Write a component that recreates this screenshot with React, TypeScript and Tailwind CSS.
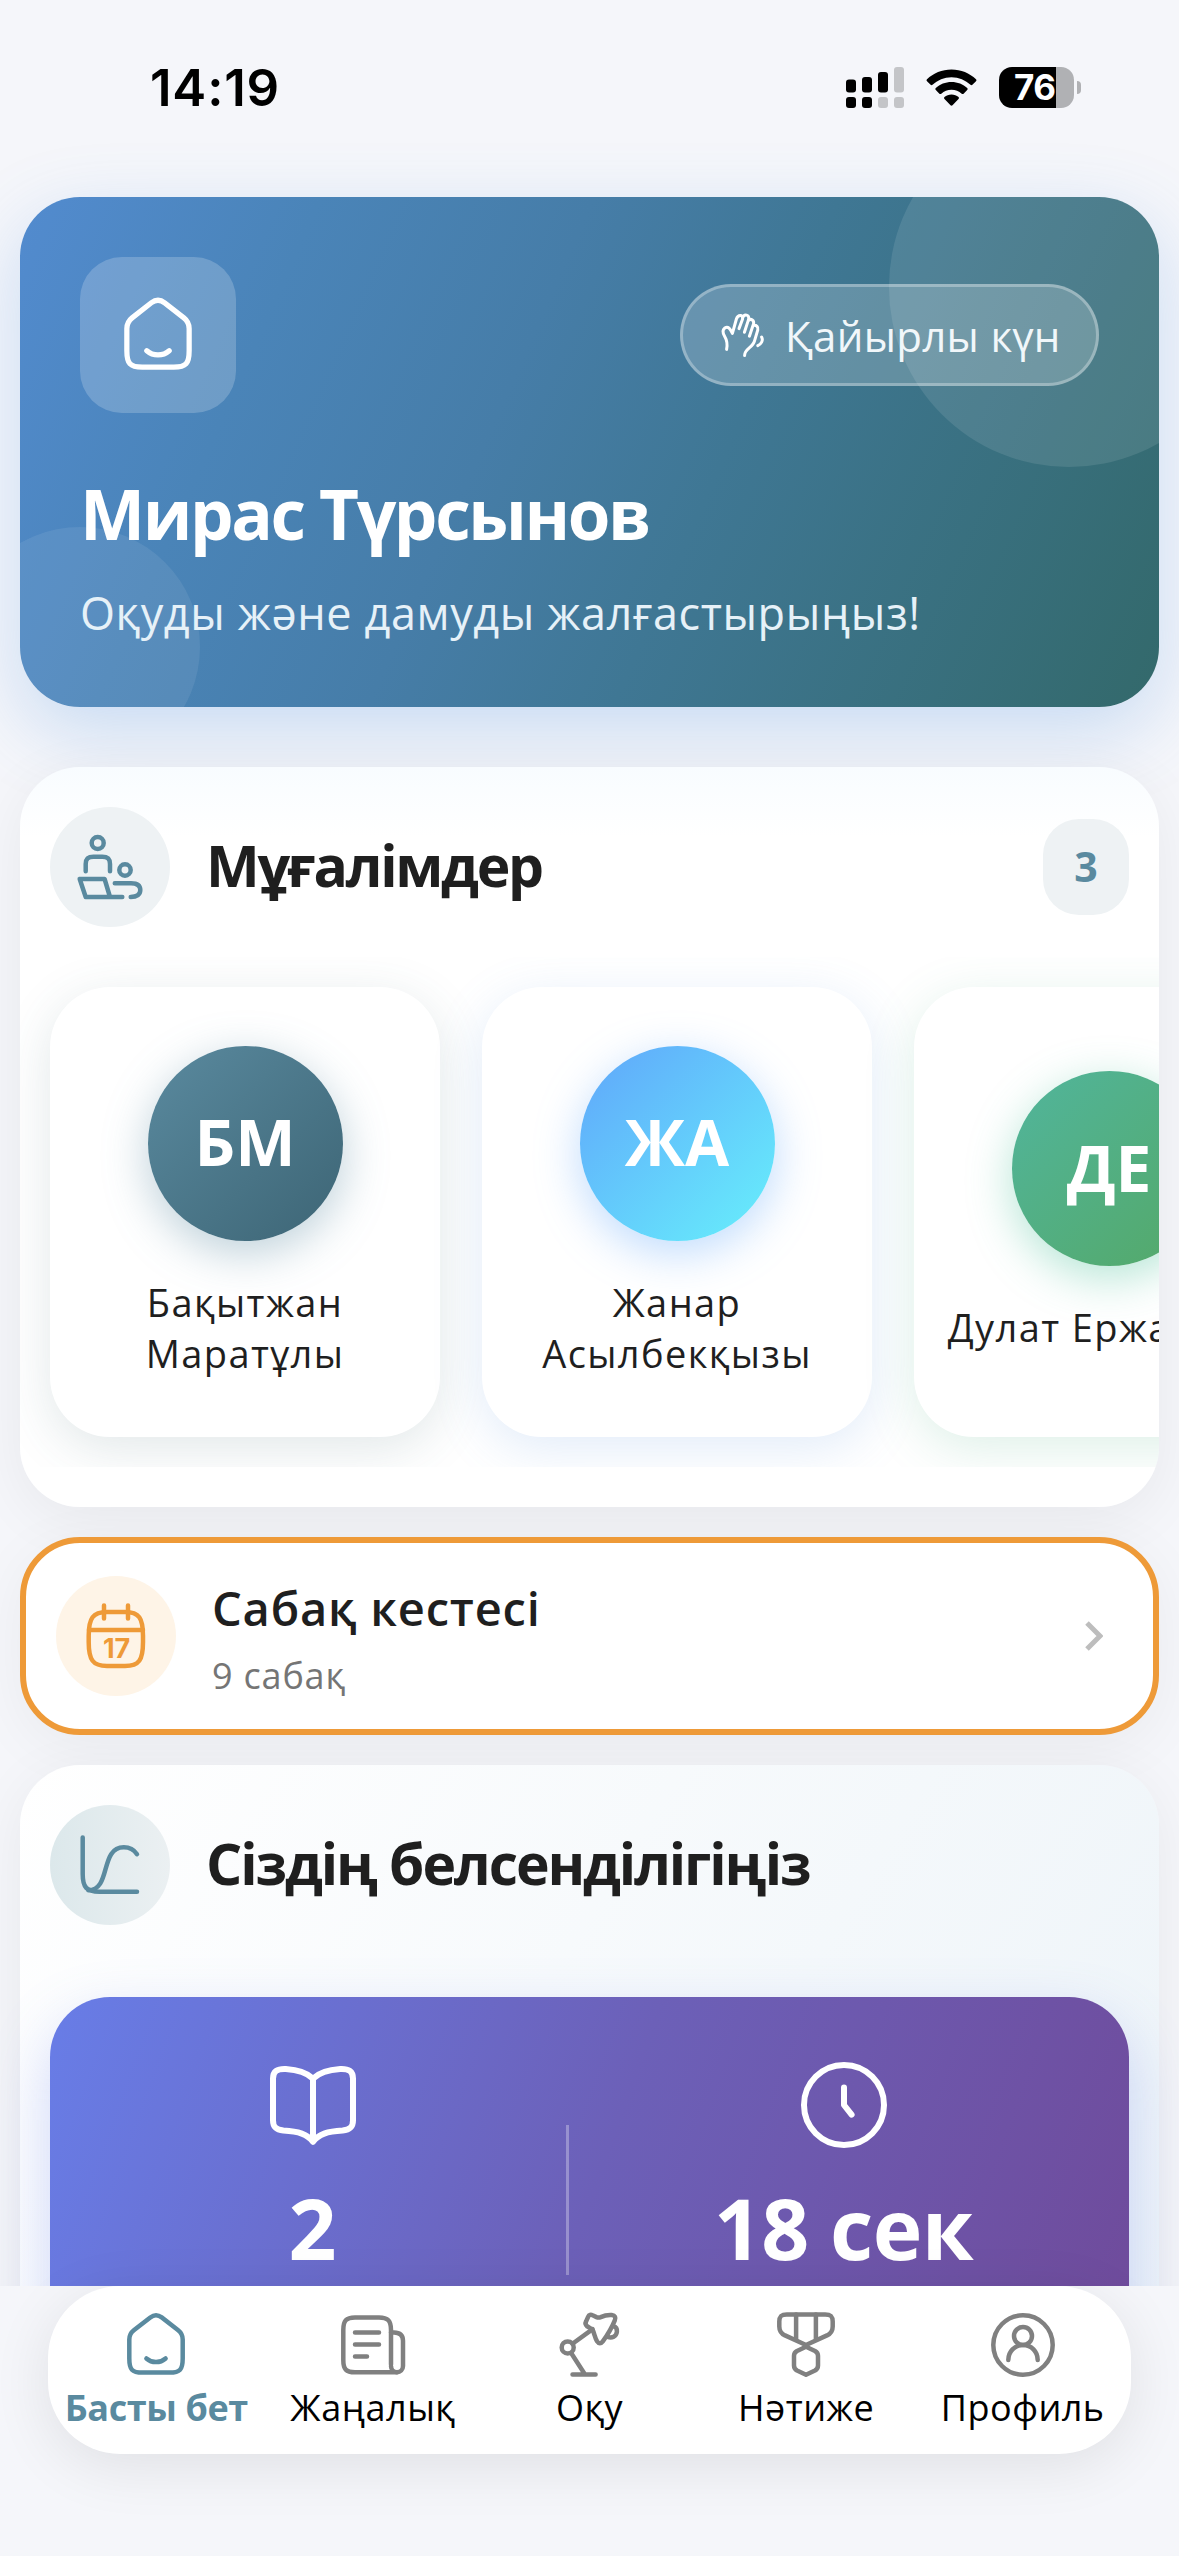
import React from 'react';
import clsx from 'clsx';

interface IconProps {
  className?: string;
  children: React.ReactNode;
}

interface Teacher {
  id: number;
  initials: string;
  lines: string[];
  avatar: string;
  shadow: string;
}

const teachers: Teacher[] = [
  {
    id: 1,
    initials: 'БМ',
    lines: ['Бақытжан', 'Маратұлы'],
    avatar: 'from-[#5a8a9f] to-[#3d6575] shadow-[0_12px_45px_rgba(90,138,159,0.4)]',
    shadow: 'shadow-[0_12px_50px_rgba(60,100,110,0.15)]',
  },
  {
    id: 2,
    initials: 'ЖА',
    lines: ['Жанар', 'Асылбекқызы'],
    avatar: 'from-[#60a5fa] to-[#67f0fb] shadow-[0_12px_45px_rgba(96,165,250,0.4)]',
    shadow: 'shadow-[0_12px_50px_rgba(96,150,220,0.18)]',
  },
  {
    id: 3,
    initials: 'ДЕ',
    lines: ['Дулат Ержанұлы'],
    avatar: 'from-[#51b59c] to-[#54a866] shadow-[0_12px_45px_rgba(70,190,150,0.4)]',
    shadow: 'shadow-[0_12px_50px_rgba(70,170,130,0.18)]',
  },
];

const Icon = ({ className, children }: IconProps) => (
  <svg
    viewBox="0 0 24 24"
    fill="none"
    stroke="currentColor"
    strokeWidth="1.5"
    strokeLinecap="round"
    strokeLinejoin="round"
    className={clsx('shrink-0', className)}
  >
    {children}
  </svg>
);

const HomeIcon = ({ className }: { className?: string }) => (
  <Icon className={className}>
    <path d="M3.1 10.2C3.1 8.7 3.6 7.9 4.6 7.1L10.1 2.8C11.3 1.9 12.7 1.9 13.9 2.8L19.4 7.1C20.4 7.9 20.9 8.7 20.9 10.2V16.5C20.9 20.2 20 21.2 16.5 21.2H7.5C4 21.2 3.1 20.2 3.1 16.5Z" />
    <path d="M8.8 16.5C10.6 18.1 13.4 18.1 15.2 16.5" />
  </Icon>
);

const NewsIcon = ({ className }: { className?: string }) => (
  <Icon className={className}>
    <path d="M18 18.5V7C18 3.9 17 2.8 14 2.8H6C3 2.8 2.1 3.9 2.1 7V17C2.1 20.1 3 21.1 6 21.1H20" />
    <path d="M18 7.8H19C21 7.8 22 8.6 22 10.6V19C22 20.2 21.1 21.1 20 21.1S18 20.2 18 19" />
    <path d="M6 7.8H14M6 11.8H14M6 15.8H10" />
  </Icon>
);

const LampIcon = ({ className }: { className?: string }) => (
  <Icon className={className}>
    <circle cx="4.9" cy="12.8" r="2" />
    <path d="M6.5 21.8H14.2M6 14.6L10.5 21.6M6.5 11.6L13.2 6.7" />
    <path d="M11.4 5.8C10.8 5.3 10.7 4.8 11 4.2L11.7 2.6C12 1.9 12.6 1.8 13.2 2.1L14.5 2.7C15 2.9 15.4 2.9 15.9 2.7C17.2 2.1 18.3 1.9 19.6 2C20.7 2.1 21 2.8 20.6 3.8C19.6 6.3 18.2 8.6 16.6 10.8C16 11.6 15.2 11.6 14.7 10.8C14 9.6 13.8 8.3 13.3 7.1C13 6.4 12.2 6.4 11.4 5.8Z" />
    <path d="M20.1 5.7C21 5.9 21.4 6.7 21.3 7.6C21.1 9.2 19.7 9.8 18.2 9.3" />
  </Icon>
);

const MedalIcon = ({ className }: { className?: string }) => (
  <Icon className={className}>
    <path d="M12 12L5 8.8C3.6 8.1 3.1 7.2 3.1 5.8V4.2C3.1 2.3 3.8 1.8 5.6 1.8H18.4C20.2 1.8 20.9 2.3 20.9 4.2V5.8C20.9 7.2 20.4 8.1 19 8.8Z" />
    <path d="M8.7 1.8V10.2M15.3 1.8V10.2" />
    <path d="M12 12.6L15 14C15.7 14.4 16 14.9 16 15.6V18.8C16 19.6 15.7 20.1 15 20.5L12 21.9L9 20.5C8.3 20.1 8 19.6 8 18.8V15.6C8 14.9 8.3 14.4 9 14Z" />
  </Icon>
);

const ProfileIcon = ({ className }: { className?: string }) => (
  <Icon className={className}>
    <circle cx="12" cy="12" r="9.9" />
    <circle cx="12" cy="9" r="3" />
    <path d="M7.1 17C7.1 14.2 9.2 12 12 12S16.9 14.2 16.9 17" />
  </Icon>
);

const TeacherIcon = ({ className }: { className?: string }) => (
  <Icon className={className}>
    <circle cx="7.9" cy="4" r="2" />
    <circle cx="17" cy="13" r="1.9" />
    <path d="M3.9 13.4V11C3.9 9.2 4.8 8.6 6.5 8.6H9.4C11.1 8.6 12 9.2 12 11V13.4" />
    <path d="M16.1 22H3.9L1.9 16H10.2L12 22" />
    <path d="M13.6 17.4H19C21 17.4 22.1 18.2 22.1 19.7C22.1 21.1 21 22 18.9 22" />
  </Icon>
);

const CalendarIcon = ({ className }: { className?: string }) => (
  <Icon className={className}>
    <path d="M8 1.8V6.2M16 1.8V6.2M3 10H21" />
    <path d="M2.9 12C2.9 6 4.3 4 9 4H15C19.7 4 21 6 21 12V14C21 20 19.7 22 15 22H9C4.3 22 2.9 20 2.9 14Z" />
    <text
      x="12.2"
      y="19.3"
      textAnchor="middle"
      fill="currentColor"
      stroke="none"
      fontSize="9"
      className="font-['Inter',sans-serif] font-bold"
    >
      17
    </text>
  </Icon>
);

const ChartIcon = ({ className }: { className?: string }) => (
  <Icon className={className}>
    <path d="M2.9 2.8V15C2.9 19.5 4.2 20.9 8.5 20.9H21" />
    <path d="M4.8 20.4C12.5 20.4 8.5 6.1 16.6 6.1C18.6 6.1 20 6.9 21 8.4" />
  </Icon>
);

const BookIcon = ({ className }: { className?: string }) => (
  <Icon className={className}>
    <path d="M12 5.4V21" />
    <path d="M12 5.4C10.6 4 8.3 3.2 5.2 3C3 2.9 2 3.6 2 5.4V15.8C2 17.6 2.8 18.2 4.6 18.4C8.4 18.6 10.6 19.3 12 21.2C13.4 19.3 15.6 18.6 19.4 18.4C21.2 18.2 22 17.6 22 15.8V5.4C22 3.6 21 2.9 18.8 3C15.7 3.2 13.4 4 12 5.4Z" />
  </Icon>
);

const ClockIcon = ({ className }: { className?: string }) => (
  <Icon className={className}>
    <circle cx="12" cy="12" r="10" />
    <path d="M12 7.6V12L13.9 14.4" />
  </Icon>
);

const WaveIcon = ({ className }: { className?: string }) => (
  <Icon className={className}>
    <path d="M3.8 19.2C4.3 16.8 4 14.6 2.8 12.6C2 11.2 1.7 9.4 2.9 8.5C4.6 7.4 5.6 8.9 6.7 11.2L8.7 4C9.4 1.8 12.2 1.6 11.8 4L10 8.8" />
    <path d="M11.8 3.4C12.6 1.2 15.4 1.8 14.8 4.2L12.7 10.6" />
    <path d="M14.7 4.6C16 3.6 17.8 4.6 17.2 6.6L15.2 12.6" />
    <path d="M17.2 7.2C18.7 6.9 19.8 8 19.4 9.4L17.8 14.8C17 18.4 12.8 18.8 12.8 22.2" />
    <path d="M21.3 13C22.3 14.8 21 16.6 19.4 17.3" />
  </Icon>
);

const navItems = [
  { label: 'Басты бет', icon: HomeIcon, active: true },
  { label: 'Жаңалық', icon: NewsIcon, active: false },
  { label: 'Оқу', icon: LampIcon, active: false },
  { label: 'Нәтиже', icon: MedalIcon, active: false },
  { label: 'Профиль', icon: ProfileIcon, active: false },
];

const StatusBar = () => (
  <div className="flex h-[197px] items-center justify-between pr-[98px] pb-[22px] pl-[150px] font-['Inter',sans-serif]">
    <span className="text-[51px] leading-none font-semibold tracking-[0.8px] text-black">14:19</span>
    <div className="flex items-center">
      <svg width="58" height="42" viewBox="0 0 58 42">
        <g fill="#000">
          <rect x="0" y="12.5" width="10" height="13" rx="3" />
          <rect x="16" y="10" width="10" height="15.5" rx="3" />
          <rect x="32" y="5" width="10" height="20.5" rx="3" />
          <rect x="0" y="30" width="10" height="11" rx="3" />
          <rect x="16" y="30" width="10" height="11" rx="3" />
        </g>
        <g fill="#c4c5c8">
          <rect x="48" y="0" width="10" height="25.5" rx="3" />
          <rect x="32" y="30" width="10" height="11" rx="3" />
          <rect x="48" y="30" width="10" height="11" rx="3" />
        </g>
      </svg>
      <svg width="51" height="38" viewBox="0 0 51 38" className="ml-[22px]" fill="#000">
        <path d="M25.5 0.5C35 0.5 43.6 4.2 50 10.2C50.6 10.8 50.6 11.6 50 12.2L46.4 15.8C45.9 16.3 45.1 16.3 44.5 15.8C39.5 11.1 32.8 8.2 25.5 8.2S11.5 11.1 6.5 15.8C5.9 16.3 5.1 16.3 4.6 15.8L1 12.2C0.4 11.6 0.4 10.8 1 10.2C7.4 4.2 16 0.5 25.5 0.5Z" />
        <path d="M25.5 13C31.6 13 37.1 15.3 41.2 19.1C41.8 19.7 41.8 20.5 41.2 21.1L37.6 24.7C37.1 25.2 36.3 25.2 35.7 24.7C33 22.2 29.4 20.7 25.5 20.7S18 22.2 15.3 24.7C14.7 25.2 13.9 25.2 13.4 24.7L9.8 21.1C9.2 20.5 9.2 19.7 9.8 19.1C13.9 15.3 19.4 13 25.5 13Z" />
        <path d="M25.5 25.4C28.2 25.4 30.7 26.4 32.5 28.1C33.1 28.7 33.1 29.5 32.5 30.1L26.5 36.3C25.9 36.9 25.1 36.9 24.5 36.3L18.5 30.1C17.9 29.5 17.9 28.7 18.5 28.1C20.3 26.4 22.8 25.4 25.5 25.4Z" />
      </svg>
      <div className="ml-[22px] flex h-[41px] w-[75px] items-center overflow-hidden rounded-[13px] bg-[linear-gradient(90deg,#000_76%,#b0b1b4_76%)] pl-[15px]">
        <span className="text-[35px] leading-none font-bold tracking-[-0.5px] text-white">76</span>
      </div>
      <div className="ml-[3px] h-[13px] w-[4px] rounded-r-full bg-[#b0b1b4]" />
    </div>
  </div>
);

const WelcomeCard = () => (
  <section className="relative h-[510px] rounded-[60px] shadow-[0_24px_75px_rgba(74,144,226,0.26)]">
    <div className="relative h-full overflow-hidden rounded-[60px] bg-[linear-gradient(114deg,#528bcf_0%,#4a84b8_22%,#467da8_42%,#3f7794_60%,#33696b_100%)] px-[60px] pt-[60px]">
      <div className="absolute -top-[90px] -right-[90px] size-[360px] rounded-full bg-white/10" />
      <div className="absolute -bottom-[60px] -left-[60px] size-[240px] rounded-full bg-white/8" />
      <div className="relative flex items-center justify-between">
        <div className="flex size-[156px] items-center justify-center rounded-[42px] bg-white/20 text-white">
          <HomeIcon className="size-[84px]" />
        </div>
        <div className="flex h-[102px] w-[419px] items-center rounded-full border-3 border-white/30 bg-white/20 pl-[36px] text-white">
          <WaveIcon className="size-[48px]" />
          <span className="ml-[18px] text-[42px] tracking-[0.3px] whitespace-nowrap text-[#f1f7fa]">Қайырлы күн</span>
        </div>
      </div>
      <h1 className="relative mt-[52px] text-[69px] leading-[96px] font-bold tracking-[-2.4px] whitespace-nowrap text-white">
        Мирас Түрсынов
      </h1>
      <p className="relative mt-[22px] text-[45px] leading-[60px] tracking-[0.6px] whitespace-nowrap text-[#e6f1f8]">
        Оқуды және дамуды жалғастырыңыз!
      </p>
    </div>
  </section>
);

const TeacherCard = ({ teacher }: { teacher: Teacher }) => (
  <div
    className={clsx(
      'flex h-[450px] w-[390px] shrink-0 flex-col items-center justify-center rounded-[60px] bg-white',
      teacher.shadow
    )}
  >
    <div
      className={clsx(
        'flex size-[195px] items-center justify-center rounded-full bg-linear-to-br pb-[2px] text-[64px] font-bold text-white',
        teacher.avatar
      )}
    >
      {teacher.initials}
    </div>
    <div className="mt-[36px] text-center text-[38px] leading-[51px] font-medium tracking-[1.4px] text-[#1f1f1f]">
      {teacher.lines.map((line) => (
        <div key={line} className="whitespace-nowrap">
          {line}
        </div>
      ))}
    </div>
  </div>
);

const TeachersSection = () => (
  <section className="h-[740px] overflow-hidden rounded-[60px] bg-[linear-gradient(180deg,#f8fcff_0px,#fff_70px)] pt-[40px]">
    <div className="flex h-[120px] items-center px-[30px]">
      <div className="flex size-[120px] items-center justify-center rounded-full bg-[#eef2f4] text-[#5a8a9f]">
        <TeacherIcon className="size-[72px]" />
      </div>
      <h2 className="ml-[36px] pb-[3px] text-[57px] leading-none font-bold tracking-[-2.3px] text-[#1f1f1f]">
        Мұғалімдер
      </h2>
      <div className="ml-auto flex h-[96px] w-[86px] items-center justify-center rounded-[36px] bg-[#eef2f4] text-[41px] font-bold text-[#5a8a9f]">
        3
      </div>
    </div>
    <div className="mt-[30px] flex h-[510px] gap-[42px] overflow-hidden pt-[30px] pl-[30px]">
      {teachers.map((teacher) => (
        <TeacherCard key={teacher.id} teacher={teacher} />
      ))}
    </div>
  </section>
);

const ScheduleCard = () => (
  <section className="flex h-[198px] items-center rounded-[60px] border-6 border-[#ee9a38] bg-white px-[30px] shadow-[0_12px_60px_rgba(0,0,0,0.05)]">
    <div className="flex size-[120px] items-center justify-center rounded-full bg-[#fef4e7] text-[#ee9a38]">
      <CalendarIcon className="size-[72px]" />
    </div>
    <div className="ml-[36px] pt-[3px]">
      <h3 className="text-[47px] leading-[66px] font-semibold tracking-[0.8px] text-[#1f1f1f]">Сабақ кестесі</h3>
      <p className="mt-[9px] text-[36px] leading-[51px] tracking-[0.8px] text-[#757575]">9 сабақ</p>
    </div>
    <svg width="18" height="30" viewBox="0 0 18 30" fill="none" stroke="#bdbdbd" strokeWidth="5" className="mr-[20px] ml-auto">
      <path d="M2 2L15 15L2 28" />
    </svg>
  </section>
);

const ActivitySection = () => (
  <section className="h-[700px] rounded-[60px] bg-[linear-gradient(122deg,#fff_0%,#ecf3f8_100%)] px-[30px] pt-[40px] shadow-[0_12px_60px_rgba(0,0,0,0.06)]">
    <div className="flex h-[120px] items-center">
      <div className="flex size-[120px] items-center justify-center rounded-full bg-linear-to-r from-[#dce8eb] to-[#ebf0f2] text-[#5a8a9f]">
        <ChartIcon className="size-[72px]" />
      </div>
      <h2 className="ml-[36px] pb-[3px] text-[57px] leading-none font-bold tracking-[-2.1px] whitespace-nowrap text-[#1f1f1f]">
        Сіздің белсенділігіңіз
      </h2>
    </div>
    <div className="mt-[72px] flex h-[405px] items-center rounded-[60px] bg-[linear-gradient(110deg,#687de7_0%,#6c60b8_50%,#6f4a9a_100%)] pl-[9px] text-white shadow-[0_24px_60px_rgba(102,126,234,0.3)]">
      <div className="flex h-[285px] w-[507px] flex-col items-center">
        <BookIcon className="size-[96px]" />
        <span className="mt-[24px] text-[84px] leading-[102px] font-bold">2</span>
      </div>
      <div className="h-[150px] w-[3px] bg-white/30" />
      <div className="flex h-[285px] w-[549px] flex-col items-center">
        <ClockIcon className="size-[96px]" />
        <span className="mt-[24px] text-[84px] leading-[102px] font-bold tracking-[-0.5px]">18 сек</span>
      </div>
    </div>
  </section>
);

const BottomNav = () => (
  <footer className="relative h-[270px] bg-[#f5f6fa] px-[48px]">
    <nav className="flex h-[168px] rounded-[72px] bg-white shadow-[0_12px_60px_rgba(0,0,0,0.09)]">
      {navItems.map(({ label, icon: NavIcon, active }) => (
        <button key={label} type="button" className="flex flex-1 flex-col items-center pt-[23px]">
          <NavIcon className={clsx('size-[72px]', active ? 'text-[#5a8a9f]' : 'text-[#808080]')} />
          <span
            className={clsx(
              'mt-[2px] text-[36px] leading-[50px] whitespace-nowrap',
              active ? 'font-bold tracking-[-0.4px] text-[#5a8a9f]' : 'tracking-[0.5px] text-black'
            )}
          >
            {label}
          </span>
        </button>
      ))}
    </nav>
  </footer>
);

const App = () => {
  return (
    <div className="h-[2556px] w-[1179px] overflow-hidden bg-[#f5f6fa] font-['Open_Sans','Noto_Sans',sans-serif]">
      <main className="h-[2286px] overflow-hidden">
        <StatusBar />
        <div className="px-[20px]">
          <WelcomeCard />
          <div className="relative mt-[60px] flex flex-col gap-[30px]">
            <div className="rounded-[60px] shadow-[0_12px_60px_rgba(0,0,0,0.06)]">
              <TeachersSection />
            </div>
            <ScheduleCard />
            <ActivitySection />
          </div>
        </div>
      </main>
      <BottomNav />
    </div>
  );
};

export default App;
